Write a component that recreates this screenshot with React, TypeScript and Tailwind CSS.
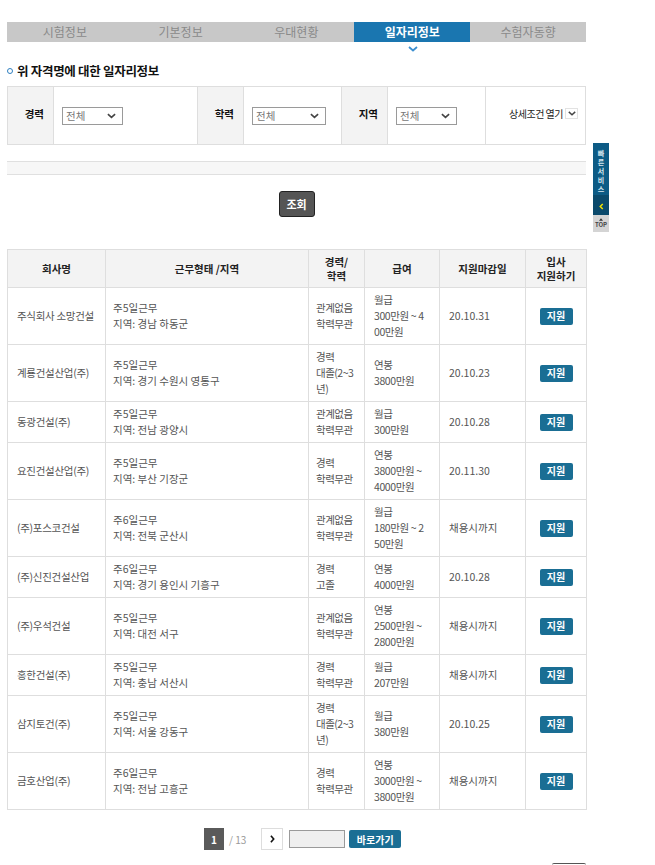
import { ReactNode } from 'react';

const font = { fontFamily: '"Noto Sans CJK KR", "Noto Sans", sans-serif' };

const tabs = ['시험정보', '기본정보', '우대현황', '일자리정보', '수험자동향'];

type Job = {
  company: string;
  work: string;
  area: string;
  career: string[];
  pay: string[];
  due: string;
};

const jobs: Job[] = [
  { company: '주식회사 소망건설', work: '주5일근무', area: '지역: 경남 하동군', career: ['관계없음', '학력무관'], pay: ['월급', '300만원 ~ 4', '00만원'], due: '20.10.31' },
  { company: '계룡건설산업(주)', work: '주5일근무', area: '지역: 경기 수원시 영통구', career: ['경력', '대졸(2~3', '년)'], pay: ['연봉', '3800만원'], due: '20.10.23' },
  { company: '동광건설(주)', work: '주5일근무', area: '지역: 전남 광양시', career: ['관계없음', '학력무관'], pay: ['월급', '300만원'], due: '20.10.28' },
  { company: '요진건설산업(주)', work: '주5일근무', area: '지역: 부산 기장군', career: ['경력', '학력무관'], pay: ['연봉', '3800만원 ~', '4000만원'], due: '20.11.30' },
  { company: '(주)포스코건설', work: '주6일근무', area: '지역: 전북 군산시', career: ['관계없음', '학력무관'], pay: ['월급', '180만원 ~ 2', '50만원'], due: '채용시까지' },
  { company: '(주)신진건설산업', work: '주6일근무', area: '지역: 경기 용인시 기흥구', career: ['경력', '고졸'], pay: ['연봉', '4000만원'], due: '20.10.28' },
  { company: '(주)우석건설', work: '주5일근무', area: '지역: 대전 서구', career: ['관계없음', '학력무관'], pay: ['연봉', '2500만원 ~', '2800만원'], due: '채용시까지' },
  { company: '홍한건설(주)', work: '주5일근무', area: '지역: 충남 서산시', career: ['경력', '학력무관'], pay: ['월급', '207만원'], due: '채용시까지' },
  { company: '삼지토건(주)', work: '주5일근무', area: '지역: 서울 강동구', career: ['경력', '대졸(2~3', '년)'], pay: ['월급', '380만원'], due: '20.10.25' },
  { company: '금호산업(주)', work: '주6일근무', area: '지역: 전남 고흥군', career: ['경력', '학력무관'], pay: ['연봉', '3000만원 ~', '3800만원'], due: '채용시까지' },
];

const Chevron = ({ className = '' }: { className?: string }) => (
  <svg viewBox="0 0 10 6" className={className} fill="none">
    <path d="M1 1l4 3.5L9 1" stroke="currentColor" strokeWidth="1.8" />
  </svg>
);

const Select = ({ width }: { width: string }) => (
  <div className={`${width} h-[18px] border border-[#9a9a9a] bg-white flex items-center justify-between pl-[3px] pr-[6px]`}>
    <span className="text-[10.5px] text-[#777]">전체</span>
    <Chevron className="w-[9px] h-[6px] text-[#444]" />
  </div>
);

const Lines = ({ lines }: { lines: string[] }) => (
  <>
    {lines.map((l, i) => (
      <div key={i}>{l}</div>
    ))}
  </>
);

const Th = ({ children, className = '' }: { children: ReactNode; className?: string }) => (
  <th className={`border border-[#dedede] bg-[#f3f3f3] text-center font-bold text-[10.5px] text-[#222] leading-[13.5px] ${className}`}>
    {children}
  </th>
);

export default function App() {
  return (
    <div className="relative w-[655px] h-[865px] bg-white overflow-hidden" style={font}>
      <div className="w-[579px] ml-[7px] pt-[22px]">
        {/* tab bar */}
        <div className="flex h-[20px] bg-[#c8c8c8]">
          {tabs.map((t, i) => (
            <div
              key={t}
              className={
                i === 3
                  ? 'w-[116px] flex items-center justify-center bg-[#1a76b0] text-white font-bold text-[12px]'
                  : 'flex-1 flex items-center justify-center text-[#8a8a8a] text-[12px]'
              }
            >
              {t}
            </div>
          ))}
        </div>
        <div className="flex h-[10px] pl-[401px] pt-[4px]">
          <Chevron className="w-[10px] h-[6px] text-[#3c8fd0]" />
        </div>

        <div className="flex items-center gap-[4px] h-[16px] mt-[11px]">
          <span className="w-[6px] h-[6px] rounded-full border-[1.5px] border-[#2f7fc0]" />
          <span className="text-[12.5px] font-bold text-[#111] tracking-[-0.3px]">위 자격명에 대한 일자리정보</span>
        </div>

        {/* search conditions */}
        <div className="mt-[7px] flex h-[59px] border border-[#dedede] text-[10.5px]">
          <div className="w-[46px] bg-[#f3f3f3] border-r border-[#dedede] flex items-center justify-end pr-[9px] pb-[4px] font-bold text-[#111]">경력</div>
          <div className="w-[144px] border-r border-[#dedede] flex items-center pl-[8px]">
            <Select width="w-[61px]" />
          </div>
          <div className="w-[46px] bg-[#f3f3f3] border-r border-[#dedede] flex items-center justify-end pr-[9px] pb-[4px] font-bold text-[#111]">학력</div>
          <div className="w-[98px] border-r border-[#dedede] flex items-center pl-[8px]">
            <Select width="w-[74px]" />
          </div>
          <div className="w-[46px] bg-[#f3f3f3] border-r border-[#dedede] flex items-center justify-end pr-[9px] pb-[4px] font-bold text-[#111]">지역</div>
          <div className="w-[98px] border-r border-[#dedede] flex items-center pl-[8px]">
            <Select width="w-[61px]" />
          </div>
          <div className="flex-1 flex items-center justify-end pr-[7px] pb-[4px] gap-[2px] text-[#222] text-[10px]">
            <span className="tracking-[-0.5px]">상세조건 열기</span>
            <span className="w-[13px] h-[11px] border border-[#e2e2e2] bg-white flex items-center justify-center">
              <Chevron className="w-[8px] h-[5px] text-[#444]" />
            </span>
          </div>
        </div>

        <div className="mt-[16px] h-[14px] border-y border-[#e0e0e0] bg-[#f7f7f7]" />

        <div className="flex justify-center mt-[16px]">
          <button className="w-[36px] h-[26px] rounded-[3px] border-[1.5px] border-[#222] bg-[#555] text-white text-[11px] font-bold">
            조회
          </button>
        </div>

        {/* job list */}
        <table className="mt-[32px] w-[579px] border-collapse table-fixed">
          <colgroup>
            <col className="w-[98px]" />
            <col className="w-[203px]" />
            <col className="w-[56px]" />
            <col className="w-[75px]" />
            <col className="w-[86px]" />
            <col className="w-[61px]" />
          </colgroup>
          <thead>
            <tr className="h-[38px]">
              <Th>회사명</Th>
              <Th>근무형태 /지역</Th>
              <Th>
                <div>경력/</div>
                <div>학력</div>
              </Th>
              <Th>급여</Th>
              <Th>지원마감일</Th>
              <Th>
                <div>입사</div>
                <div>지원하기</div>
              </Th>
            </tr>
          </thead>
          <tbody className="text-[10.5px] text-[#555] leading-[16px]">
            {jobs.map((j) => (
              <tr key={j.company}>
                <td className="border border-[#dedede] pl-[9px] py-[4px] whitespace-nowrap tracking-[-0.3px]">{j.company}</td>
                <td className="border border-[#dedede] pl-[7px] py-[4px] whitespace-nowrap">
                  <div>{j.work}</div>
                  <div>{j.area}</div>
                </td>
                <td className="border border-[#dedede] pl-[7px] py-[4px] whitespace-nowrap tracking-[-0.5px]">
                  <Lines lines={j.career} />
                </td>
                <td className="border border-[#dedede] pl-[9px] py-[4px] whitespace-nowrap tracking-[-0.4px]">
                  <Lines lines={j.pay} />
                </td>
                <td className="border border-[#dedede] pl-[9px] py-[4px] whitespace-nowrap">{j.due}</td>
                <td className="border border-[#dedede] py-[4px] text-center">
                  <span className="inline-flex w-[33px] h-[17px] items-center justify-center rounded-[2px] bg-[#1a6e94] text-white font-bold text-[10px] align-middle">
                    지원
                  </span>
                </td>
              </tr>
            ))}
          </tbody>
        </table>

        {/* paging */}
        <div className="flex items-center mt-[18px] pl-[197px] h-[22px]">
          <span className="w-[20px] h-[22px] bg-[#5a5a5a] text-white text-[10px] font-bold flex items-center justify-center">1</span>
          <span className="ml-[5px] text-[10px] text-[#999]">/ 13</span>
          <span className="ml-[15px] w-[22px] h-[22px] border border-[#ddd] bg-white flex items-center justify-center">
            <svg viewBox="0 0 6 10" className="w-[5px] h-[8px]" fill="none">
              <path d="M1 1l3.5 4L1 9" stroke="#111" strokeWidth="2" />
            </svg>
          </span>
          <span className="ml-[6px] w-[56px] h-[18px] border border-[#9a9a9a] bg-[#efefef]" />
          <button className="ml-[4px] w-[52px] h-[18px] rounded-[2px] bg-[#1a6e94] text-white text-[10px] font-bold">바로가기</button>
        </div>
        <div className="mt-[13px] ml-[545px] w-[34px] h-[4px] border-t border-[#555] rounded-t-[2px]" />
      </div>

      {/* quick service bar */}
      <div className="absolute left-[593px] top-[143px] w-[16px] flex flex-col">
        <div className="h-[52px] bg-[#0d5b85] flex flex-col items-center pt-[6px] text-[7px] font-bold text-[#d8e6ee] leading-[9px]">
          <span>빠</span>
          <span>른</span>
          <span>서</span>
          <span>비</span>
          <span>스</span>
        </div>
        <div className="h-[20px] bg-[#0b4a6c] flex items-center justify-center pt-[2px]">
          <svg viewBox="0 0 6 8" className="w-[5px] h-[7px]" fill="none">
            <path d="M4.5 1L1.5 4l3 3" stroke="#f2e200" strokeWidth="1.8" />
          </svg>
        </div>
        <div className="h-[17px] bg-[#d4d4d4] flex flex-col items-center justify-center">
          <svg viewBox="0 0 6 4" className="w-[4px] h-[3px]">
            <path d="M3 0l3 4H0z" fill="#333" />
          </svg>
          <span className="text-[6px] font-bold text-[#444] leading-[8px]">TOP</span>
        </div>
      </div>
    </div>
  );
}
